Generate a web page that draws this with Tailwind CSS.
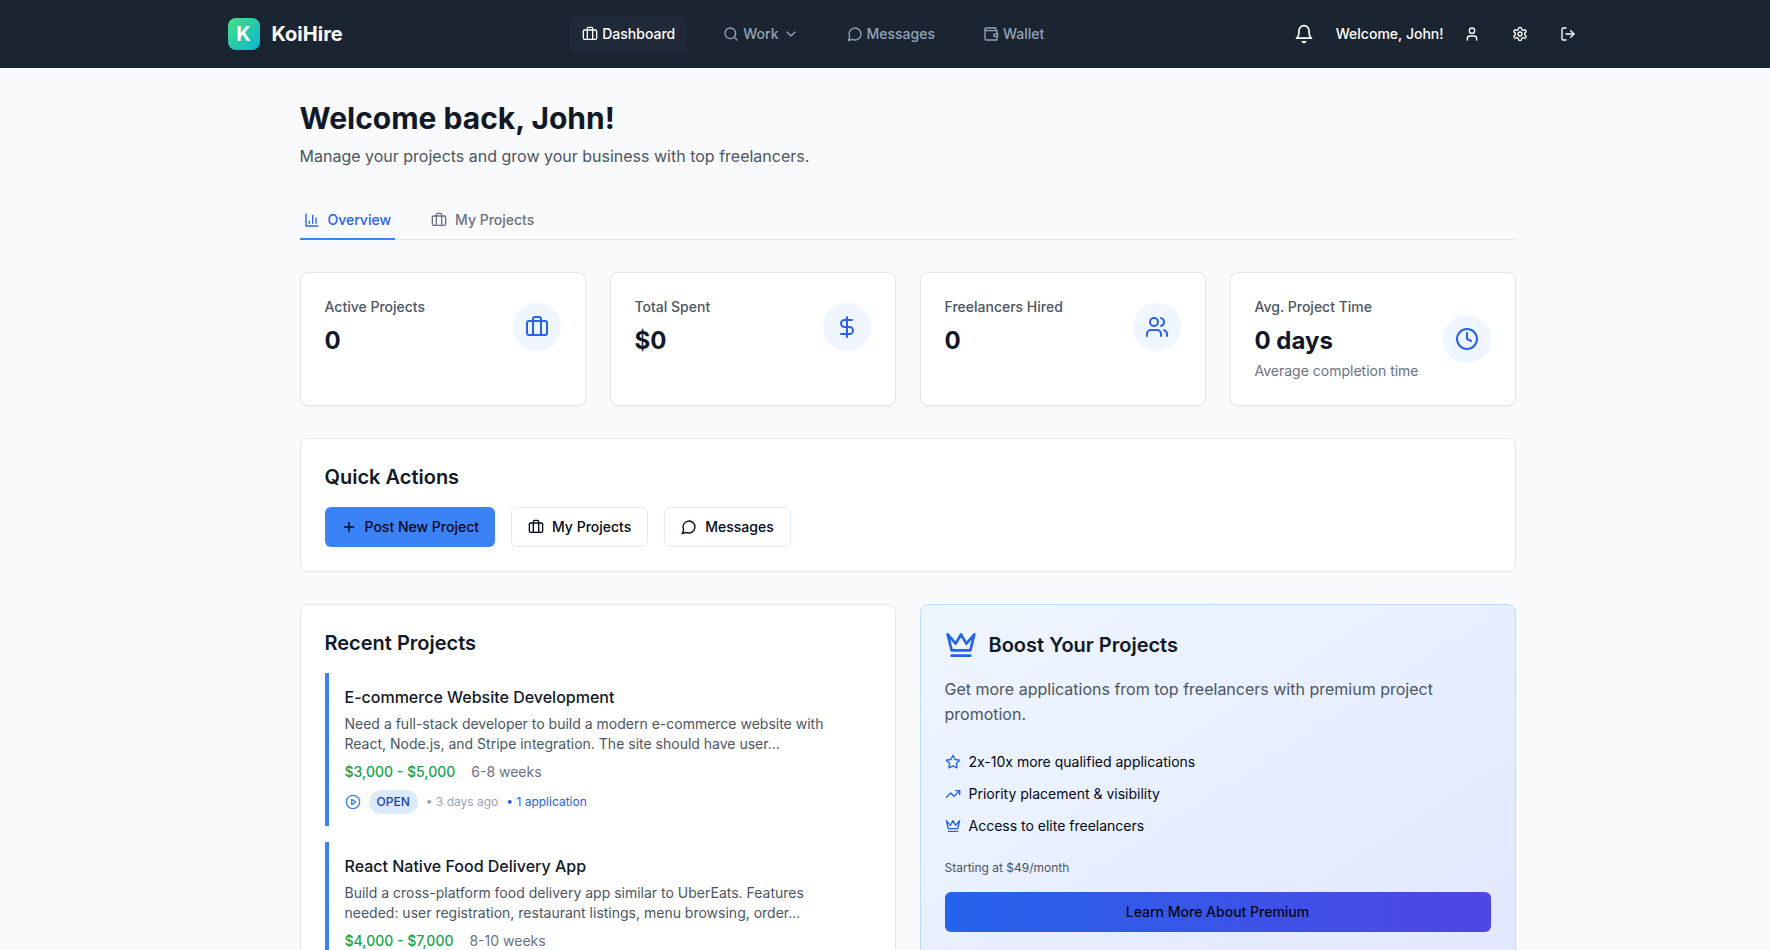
<!DOCTYPE html>
<html lang="en">
<head>
<meta charset="utf-8">
<meta name="viewport" content="width=device-width, initial-scale=1">
<title>KoiHire</title>
<script src="https://cdn.jsdelivr.net/npm/@tailwindcss/browser@4"></script>
</head>
<body class="min-h-screen bg-[#f9fafc] font-['Inter',sans-serif] text-[#020817] [scrollbar-width:none]">
<svg class="hidden" aria-hidden="true">
  <symbol id="briefcase" viewBox="0 0 24 24"><path d="M16 20V4a2 2 0 0 0-2-2h-4a2 2 0 0 0-2 2v16"/><rect width="20" height="14" x="2" y="6" rx="2"/></symbol>
  <symbol id="search" viewBox="0 0 24 24"><circle cx="11" cy="11" r="8"/><path d="m21 21-4.3-4.3"/></symbol>
  <symbol id="chevron" viewBox="0 0 24 24"><path d="m6 9 6 6 6-6"/></symbol>
  <symbol id="message" viewBox="0 0 24 24"><path d="M7.9 20A9 9 0 1 0 4 16.1L2 22Z"/></symbol>
  <symbol id="wallet" viewBox="0 0 24 24"><path d="M21 12V7H5a2 2 0 0 1 0-4h14v4"/><path d="M3 5v14a2 2 0 0 0 2 2h16v-5"/><path d="M18 12a2 2 0 0 0 0 4h4v-4Z"/></symbol>
  <symbol id="bell" viewBox="0 0 24 24"><path d="M6 8a6 6 0 0 1 12 0c0 7 3 9 3 9H3s3-2 3-9"/><path d="M10.3 21a1.94 1.94 0 0 0 3.4 0"/></symbol>
  <symbol id="user" viewBox="0 0 24 24"><path d="M19 21v-2a4 4 0 0 0-4-4H9a4 4 0 0 0-4 4v2"/><circle cx="12" cy="7" r="4"/></symbol>
  <symbol id="settings" viewBox="0 0 24 24"><path d="M12.22 2h-.44a2 2 0 0 0-2 2v.18a2 2 0 0 1-1 1.73l-.43.25a2 2 0 0 1-2 0l-.15-.08a2 2 0 0 0-2.73.73l-.22.38a2 2 0 0 0 .73 2.73l.15.1a2 2 0 0 1 1 1.72v.51a2 2 0 0 1-1 1.74l-.15.09a2 2 0 0 0-.73 2.73l.22.38a2 2 0 0 0 2.73.73l.15-.08a2 2 0 0 1 2 0l.43.25a2 2 0 0 1 1 1.73V20a2 2 0 0 0 2 2h.44a2 2 0 0 0 2-2v-.18a2 2 0 0 1 1-1.73l.43-.25a2 2 0 0 1 2 0l.15.08a2 2 0 0 0 2.73-.73l.22-.39a2 2 0 0 0-.73-2.73l-.15-.08a2 2 0 0 1-1-1.74v-.5a2 2 0 0 1 1-1.74l.15-.09a2 2 0 0 0 .73-2.73l-.22-.38a2 2 0 0 0-2.73-.73l-.15.08a2 2 0 0 1-2 0l-.43-.25a2 2 0 0 1-1-1.73V4a2 2 0 0 0-2-2z"/><circle cx="12" cy="12" r="3"/></symbol>
  <symbol id="logout" viewBox="0 0 24 24"><path d="M9 21H5a2 2 0 0 1-2-2V5a2 2 0 0 1 2-2h4"/><path d="m16 17 5-5-5-5"/><path d="M21 12H9"/></symbol>
  <symbol id="chart" viewBox="0 0 24 24"><path d="M3 3v18h18"/><path d="M18 17V9"/><path d="M13 17V5"/><path d="M8 17v-3"/></symbol>
  <symbol id="dollar" viewBox="0 0 24 24"><path d="M12 2v20"/><path d="M17 5H9.5a3.5 3.5 0 0 0 0 7h5a3.5 3.5 0 0 1 0 7H6"/></symbol>
  <symbol id="users" viewBox="0 0 24 24"><path d="M16 21v-2a4 4 0 0 0-4-4H6a4 4 0 0 0-4 4v2"/><circle cx="9" cy="7" r="4"/><path d="M22 21v-2a4 4 0 0 0-3-3.87"/><path d="M16 3.13a4 4 0 0 1 0 7.75"/></symbol>
  <symbol id="clock" viewBox="0 0 24 24"><circle cx="12" cy="12" r="10"/><path d="M12 6v6l4 2"/></symbol>
  <symbol id="plus" viewBox="0 0 24 24"><path d="M5 12h14"/><path d="M12 5v14"/></symbol>
  <symbol id="play" viewBox="0 0 24 24"><circle cx="12" cy="12" r="10"/><path d="m10 8 6 4-6 4z"/></symbol>
  <symbol id="crown" viewBox="0 0 24 24"><path d="m2 4 3 12h14l3-12-6 7-4-7-4 7-6-7zm3 16h14"/></symbol>
  <symbol id="star" viewBox="0 0 24 24"><path d="m12 2 3.09 6.26L22 9.27l-5 4.87 1.18 6.88L12 17.77l-6.18 3.25L7 14.14 2 9.27l6.91-1.01z"/></symbol>
  <symbol id="trend" viewBox="0 0 24 24"><path d="m22 7-8.500 8.500-5-5L2 17"/><path d="M16 7h6v6"/></symbol>
</svg>

<header class="border-b border-[#1a202c] bg-[#1b2431] pl-[45px]">
  <div class="mx-auto flex h-[67px] max-w-[1360px] items-center justify-between text-sm font-medium">
    <a href="#" class="flex items-center gap-3">
      <span class="flex size-8 items-center justify-center rounded-lg bg-[linear-gradient(135deg,#4ade80,#06b6d4)] text-xl font-bold text-white">K</span>
      <span class="text-xl font-bold text-white">KoiHire</span>
    </a>
    <nav class="flex items-center gap-6 text-[#94a3b8]">
      <a href="#" class="flex h-9 items-center gap-1 rounded-md bg-[#202937] px-3 text-white"><svg class="size-4 fill-none stroke-current stroke-2 [stroke-linecap:round] [stroke-linejoin:round]"><use href="#briefcase"/></svg>Dashboard</a>
      <button type="button" class="flex h-9 items-center gap-1 px-3"><svg class="size-4 fill-none stroke-current stroke-2 [stroke-linecap:round] [stroke-linejoin:round]"><use href="#search"/></svg>Work<svg class="size-4 fill-none stroke-current stroke-2 [stroke-linecap:round] [stroke-linejoin:round]"><use href="#chevron"/></svg></button>
      <a href="#" class="flex h-9 items-center gap-1 px-3"><svg class="size-4 fill-none stroke-current stroke-2 [stroke-linecap:round] [stroke-linejoin:round]"><use href="#message"/></svg>Messages</a>
      <a href="#" class="flex h-9 items-center gap-1 px-3"><svg class="size-4 fill-none stroke-current stroke-2 [stroke-linecap:round] [stroke-linejoin:round]"><use href="#wallet"/></svg>Wallet</a>
    </nav>
    <div class="flex items-center gap-2 pl-0.5 text-white">
      <button type="button" aria-label="Notifications" class="mr-2 py-2 pl-2 pr-1.5"><svg class="size-5 fill-none stroke-current stroke-2 [stroke-linecap:round] [stroke-linejoin:round]"><use href="#bell"/></svg></button>
      <span>Welcome, John!</span>
      <button type="button" aria-label="Profile" class="p-3"><svg class="size-4 fill-none stroke-current stroke-2 [stroke-linecap:round] [stroke-linejoin:round]"><use href="#user"/></svg></button>
      <button type="button" aria-label="Settings" class="p-3"><svg class="size-4 fill-none stroke-current stroke-2 [stroke-linecap:round] [stroke-linejoin:round]"><use href="#settings"/></svg></button>
      <button type="button" aria-label="Log out" class="p-3"><svg class="size-4 fill-none stroke-current stroke-2 [stroke-linecap:round] [stroke-linejoin:round]"><use href="#logout"/></svg></button>
    </div>
  </div>
</header>

<div class="pl-[45px]">
<main class="mx-auto max-w-7xl px-8 py-8">
  <h1 class="text-3xl leading-9 font-bold text-[#111827]">Welcome back, John!</h1>
  <p class="mt-2 leading-[25px] text-[#4b5563]">Manage your projects and grow your business with top freelancers.</p>

  <nav class="mt-[33px] flex gap-8 border-b border-[#e5e7eb] text-sm font-medium">
    <button type="button" class="-mb-px flex items-center gap-2 border-b-2 border-[#3b82f6] px-1 py-2 text-[#2563eb]"><svg class="size-4 fill-none stroke-current stroke-2 [stroke-linecap:round] [stroke-linejoin:round]"><use href="#chart"/></svg>Overview</button>
    <button type="button" class="-mb-px flex items-center gap-2 border-b-2 border-transparent px-1 py-2 text-[#6b7280]"><svg class="size-4 fill-none stroke-current stroke-2 [stroke-linecap:round] [stroke-linejoin:round]"><use href="#briefcase"/></svg>My Projects</button>
  </nav>

  <section class="mt-8 grid grid-cols-4 gap-6">
    <div class="rounded-lg border border-[#e5e7eb] bg-white p-6 shadow-xs">
      <div class="flex items-center justify-between">
        <div><p class="text-sm font-medium text-[#4b5563]">Active Projects</p><p class="mt-2 text-2xl font-bold text-[#111827]">0</p></div>
        <span class="rounded-full bg-[#eff6ff] p-3 text-[#2563eb]"><svg class="size-6 fill-none stroke-current stroke-2 [stroke-linecap:round] [stroke-linejoin:round]"><use href="#briefcase"/></svg></span>
      </div>
    </div>
    <div class="rounded-lg border border-[#e5e7eb] bg-white p-6 shadow-xs">
      <div class="flex items-center justify-between">
        <div><p class="text-sm font-medium text-[#4b5563]">Total Spent</p><p class="mt-2 text-2xl font-bold text-[#111827]">$0</p></div>
        <span class="rounded-full bg-[#eff6ff] p-3 text-[#2563eb]"><svg class="size-6 fill-none stroke-current stroke-2 [stroke-linecap:round] [stroke-linejoin:round]"><use href="#dollar"/></svg></span>
      </div>
    </div>
    <div class="rounded-lg border border-[#e5e7eb] bg-white p-6 shadow-xs">
      <div class="flex items-center justify-between">
        <div><p class="text-sm font-medium text-[#4b5563]">Freelancers Hired</p><p class="mt-2 text-2xl font-bold text-[#111827]">0</p></div>
        <span class="rounded-full bg-[#eff6ff] p-3 text-[#2563eb]"><svg class="size-6 fill-none stroke-current stroke-2 [stroke-linecap:round] [stroke-linejoin:round]"><use href="#users"/></svg></span>
      </div>
    </div>
    <div class="rounded-lg border border-[#e5e7eb] bg-white p-6 shadow-xs">
      <div class="flex items-center justify-between">
        <div><p class="text-sm font-medium text-[#4b5563]">Avg. Project Time</p><p class="mt-2 text-2xl font-bold text-[#111827]">0 days</p><p class="mt-1 text-sm text-[#6b7280]">Average completion time</p></div>
        <span class="rounded-full bg-[#eff6ff] p-3 text-[#2563eb]"><svg class="size-6 fill-none stroke-current stroke-2 [stroke-linecap:round] [stroke-linejoin:round]"><use href="#clock"/></svg></span>
      </div>
    </div>
  </section>

  <section class="mt-8 rounded-lg border border-[#e5e7eb] bg-white p-6">
    <h2 class="text-xl font-semibold text-[#111827]">Quick Actions</h2>
    <div class="mt-4 flex gap-4 text-sm font-medium">
      <button type="button" class="flex h-10 items-center gap-2 rounded-md bg-[#3b82f6] px-4"><svg class="size-4 fill-none stroke-current stroke-2 [stroke-linecap:round] [stroke-linejoin:round]"><use href="#plus"/></svg>Post New Project</button>
      <button type="button" class="flex h-10 items-center gap-2 rounded-md border border-[#e2e8f0] bg-white px-4"><svg class="size-4 fill-none stroke-current stroke-2 [stroke-linecap:round] [stroke-linejoin:round]"><use href="#briefcase"/></svg>My Projects</button>
      <button type="button" class="flex h-10 items-center gap-2 rounded-md border border-[#e2e8f0] bg-white px-4"><svg class="size-4 fill-none stroke-current stroke-2 [stroke-linecap:round] [stroke-linejoin:round]"><use href="#message"/></svg>Messages</button>
    </div>
  </section>

  <div class="mt-8 grid grid-cols-2 gap-6">
    <section class="rounded-lg border border-[#e5e7eb] bg-white p-6">
      <h2 class="text-xl font-semibold text-[#111827]">Recent Projects</h2>
      <div class="mt-4 flex flex-col gap-4">
        <article class="border-l-4 border-[#3b82f6] py-3 pr-8 pl-4">
          <h3 class="leading-[25px] font-medium text-[#111827]">E-commerce Website Development</h3>
          <p class="mt-1 text-sm text-[#4b5563]">Need a full-stack developer to build a modern e-commerce website with React, Node.js, and Stripe integration. The site should have user...</p>
          <div class="mt-2 flex gap-4 text-sm"><span class="font-medium text-[#16a34a]">$3,000 - $5,000</span><span class="text-[#6b7280]">6-8 weeks</span></div>
          <div class="mt-2 flex items-center gap-2 text-xs">
            <svg class="size-4 fill-none stroke-[#3b82f6] stroke-2 [stroke-linecap:round] [stroke-linejoin:round]"><use href="#play"/></svg>
            <span class="rounded-full bg-[#dbeafe] px-2 py-1 font-medium text-[#1e40af]">OPEN</span>
            <span class="text-[#9ca3af]">• 3 days ago</span>
            <span class="text-[#2563eb]">• 1 application</span>
          </div>
        </article>
        <article class="border-l-4 border-[#3b82f6] py-3 pr-8 pl-4">
          <h3 class="leading-[25px] font-medium text-[#111827]">React Native Food Delivery App</h3>
          <p class="mt-1 text-sm text-[#4b5563]">Build a cross-platform food delivery app similar to UberEats. Features<br>needed: user registration, restaurant listings, menu browsing, order...</p>
          <div class="mt-2 flex gap-4 text-sm"><span class="font-medium text-[#16a34a]">$4,000 - $7,000</span><span class="text-[#6b7280]">8-10 weeks</span></div>
        </article>
      </div>
    </section>

    <section class="rounded-lg border border-[#bfdbfe] bg-[linear-gradient(to_bottom_right,#eff6ff,#e0e7ff)] p-6">
      <div class="flex items-center gap-3">
        <svg class="size-8 fill-none stroke-[#2563eb] stroke-2 [stroke-linecap:round] [stroke-linejoin:round]"><use href="#crown"/></svg>
        <h2 class="text-xl font-semibold text-[#111827]">Boost Your Projects</h2>
      </div>
      <p class="mt-4 leading-[25px] text-[#4b5563]">Get more applications from top freelancers with premium project promotion.</p>
      <ul class="mt-[25px] flex flex-col gap-3 text-sm">
        <li class="flex items-center gap-2"><svg class="size-4 fill-none stroke-[#2563eb] stroke-2 [stroke-linecap:round] [stroke-linejoin:round]"><use href="#star"/></svg>2x-10x more qualified applications</li>
        <li class="flex items-center gap-2"><svg class="size-4 fill-none stroke-[#2563eb] stroke-2 [stroke-linecap:round] [stroke-linejoin:round]"><use href="#trend"/></svg>Priority placement &amp; visibility</li>
        <li class="flex items-center gap-2"><svg class="size-4 fill-none stroke-[#2563eb] stroke-2 [stroke-linecap:round] [stroke-linejoin:round]"><use href="#crown"/></svg>Access to elite freelancers</li>
      </ul>
      <p class="mt-6 text-xs text-[#4b5563]">Starting at $49/month</p>
      <button type="button" class="mt-4 h-10 w-full rounded-md bg-[linear-gradient(to_right,#2563eb,#4f46e5)] text-sm font-medium">Learn More About Premium</button>
    </section>
  </div>
</main>
</div>
</body>
</html>
